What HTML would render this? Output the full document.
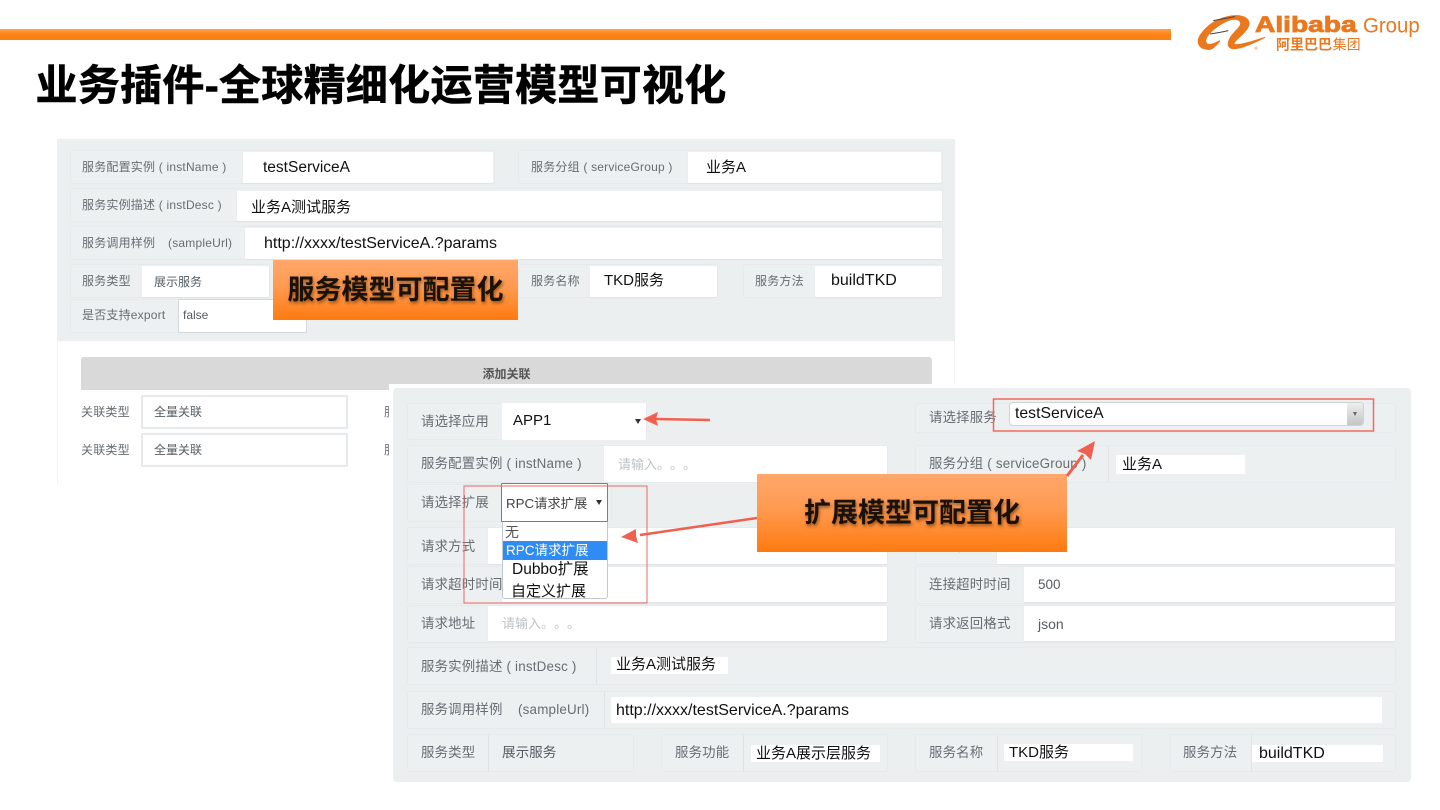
<!DOCTYPE html>
<html lang="zh"><head><meta charset="utf-8"><title>业务插件</title>
<style>
html,body{margin:0;padding:0;background:#fff}
#p{position:relative;width:1440px;height:810px;overflow:hidden;background:#fff;font-family:"Liberation Sans","Noto Sans CJK SC",sans-serif}
#p div{position:absolute;box-sizing:border-box}
.g{background:#edf0f1;border:1px solid #e7eaec;border-radius:3px}
.w{background:#fff;border-radius:1px}
.b{box-shadow:0 1px 1px #dfe3e6}
.t{white-space:nowrap;line-height:20px;height:20px;font-size:13.4px;letter-spacing:.2px;color:#666d72}
.t.m{font-size:12px;letter-spacing:.2px}
.k{white-space:nowrap;line-height:20px;height:20px;font-size:15px;color:#111}
.s{white-space:nowrap;line-height:20px;height:20px;font-size:13px;color:#555c61}
.h{white-space:nowrap;line-height:20px;height:20px;font-size:13px;color:#bcc2c6;text-spacing-trim:space-all}
.c{background:linear-gradient(#ffa76c,#ff9a50 45%,#ff7a10);text-align:center;font-weight:700;color:#1a1208;text-shadow:1px 2px 3px rgba(60,30,0,.55)}
</style></head><body><div id="p">

<div style="left:0;top:29px;width:1171px;height:11px;background:linear-gradient(#ffa348,#ff8418 45%,#fb7f14)"></div>

<svg style="position:absolute;left:1160px;top:0" width="280" height="70" viewBox="0 0 840 210">
<path d="M150 148C115 150 105 125 125 100C150 65 195 45 235 47C262 50 275 65 262 85C248 108 225 118 222 130C222 140 260 130 315 112C280 130 240 148 218 146C195 142 205 115 225 95C240 80 250 70 235 60C215 52 185 70 165 85C145 100 130 120 140 130C145 138 165 130 180 122C170 135 160 146 150 148Z" fill="#e9781e" stroke="#e9781e" stroke-width="3"/>
<path d="M150 102L180 97L205 92M160 62L225 50" fill="none" stroke="#444" stroke-width="3"/>
<text x="285" y="96" font-family="Liberation Sans" font-weight="700" font-size="66" fill="#e9781e" stroke="#e9781e" stroke-width="2.500" textLength="305" lengthAdjust="spacingAndGlyphs">Alibaba</text>
<text x="609" y="98" font-family="Liberation Sans" font-size="63" fill="#e9781e" textLength="170" lengthAdjust="spacingAndGlyphs">Group</text>
<text x="348" y="149" font-family="Liberation Sans,Noto Sans CJK SC,sans-serif" font-weight="700" font-size="42" fill="#e9781e">阿里巴巴</text>
<text x="518" y="149" font-family="Liberation Sans,Noto Sans CJK SC,sans-serif" font-size="42" fill="#e9781e">集团</text>
<text x="283" y="150" font-family="Liberation Sans" font-size="14" fill="#e9781e">®</text>
</svg>

<div style="left:35.500px;top:60px;height:52px;line-height:52px;font-size:42px;font-weight:700;letter-spacing:.3px;-webkit-text-stroke:.6px #000;color:#000;white-space:nowrap">业务插件-全球精细化运营模型可视化</div>

<!-- panel 1 -->
<div style="left:57px;top:341px;width:898px;height:143px;border-left:1px solid #f2f3f4;border-right:1px solid #f2f3f4"></div>
<div style="left:57px;top:139px;width:898px;height:202px;background:#ecefF0"></div>

<div class="g" style="left:70px;top:150px;width:425px;height:34px"></div>
<div class="w b" style="left:243px;top:152px;width:250px;height:31px"></div>
<div class="g" style="left:518px;top:150px;width:425px;height:34px"></div>
<div class="w b" style="left:688px;top:152px;width:253px;height:31px"></div>
<div class="g" style="left:70px;top:188px;width:873px;height:34px"></div>
<div class="w b" style="left:237px;top:191px;width:705px;height:30px"></div>
<div class="g" style="left:70px;top:226px;width:873px;height:34px"></div>
<div class="w b" style="left:245px;top:228px;width:697px;height:31px"></div>
<div class="g" style="left:70px;top:264px;width:200px;height:34px"></div>
<div class="w b" style="left:142px;top:266px;width:127px;height:31px"></div>
<div class="g" style="left:518px;top:264px;width:200px;height:34px"></div>
<div class="w b" style="left:590px;top:266px;width:127px;height:31px"></div>
<div class="g" style="left:743px;top:264px;width:200px;height:34px"></div>
<div class="w b" style="left:815px;top:266px;width:127px;height:31px"></div>
<div class="g" style="left:70px;top:299px;width:237px;height:34px"></div>
<div class="w" style="left:178px;top:299px;width:129px;height:34px;border:1px solid #d4d8dc"></div>

<div class="t m" style="left:82px;top:157px">服务配置实例 ( instName )</div>
<div class="k" style="left:263px;top:158px;font-size:15.500px">testServiceA</div>
<div class="t m" style="left:531px;top:157px">服务分组 ( serviceGroup )</div>
<div class="k" style="left:706px;top:158px">业务A</div>
<div class="t m" style="left:82px;top:195px">服务实例描述 ( instDesc )</div>
<div class="k" style="left:251px;top:198px">业务A测试服务</div>
<div class="t m" style="left:82px;top:233px">服务调用样例</div>
<div class="t m" style="left:168px;top:233px">(sampleUrl)</div>
<div class="k" style="left:264px;top:234px;font-size:16px">http://xxxx/testServiceA.?params</div>
<div class="t m" style="left:82px;top:271px">服务类型</div>
<div class="s" style="left:154px;top:272px;font-size:12px">展示服务</div>
<div class="t m" style="left:531px;top:271px">服务名称</div>
<div class="k" style="left:604px;top:271px">TKD服务</div>
<div class="t m" style="left:755px;top:271px">服务方法</div>
<div class="k" style="left:831px;top:271px;font-size:16px">buildTKD</div>
<div class="t m" style="left:82px;top:305px">是否支持export</div>
<div class="s" style="left:183px;top:305px;font-size:12px">false</div>

<div style="left:81px;top:357px;width:851px;height:33px;background:#d9d9d9;border-radius:3px 3px 0 0;text-align:center;line-height:35px;font-size:12px;font-weight:700;color:#555">添加关联</div>
<div class="t m" style="left:81px;top:402px">关联类型</div>
<div class="w" style="left:141px;top:395px;width:207px;height:34px;border:2px solid #e6eaed"></div>
<div class="s" style="left:154px;top:402px;font-size:12px">全量关联</div>
<div class="t m" style="left:81px;top:440px">关联类型</div>
<div class="w" style="left:141px;top:433px;width:207px;height:34px;border:2px solid #e6eaed"></div>
<div class="s" style="left:154px;top:440px;font-size:12px">全量关联</div>
<div class="t m" style="left:384px;top:402px">服</div>
<div class="t m" style="left:384px;top:440px">服</div>

<div class="c" style="left:273px;top:260px;width:245px;height:60px;line-height:61px;font-size:27px">服务模型可配置化</div>

<!-- panel 2 -->
<div style="left:389px;top:384px;width:1031px;height:404px;background:#fff"></div>
<div style="left:393px;top:388px;width:1018px;height:394px;background:#ecefF0;border-radius:4px"></div>

<div class="g" style="left:407px;top:403px;width:240px;height:37px"></div>
<div class="w" style="left:502px;top:403px;width:144px;height:37px"></div>
<div class="g" style="left:915px;top:403px;width:481px;height:30px"></div>
<div class="g" style="left:407px;top:445px;width:481px;height:38px"></div>
<div class="w" style="left:604px;top:446px;width:283px;height:36px"></div>
<div class="g" style="left:915px;top:445px;width:481px;height:38px"></div>
<div class="w" style="left:1116px;top:455px;width:129px;height:19px"></div>
<div class="g" style="left:407px;top:484px;width:205px;height:38px"></div>
<div class="g" style="left:407px;top:527px;width:481px;height:38px"></div>
<div class="w b" style="left:488px;top:528px;width:399px;height:36px"></div>
<div class="g" style="left:915px;top:527px;width:481px;height:38px"></div>
<div class="w b" style="left:997px;top:528px;width:398px;height:36px"></div>
<div class="g" style="left:407px;top:566px;width:481px;height:38px"></div>
<div class="w b" style="left:502px;top:567px;width:385px;height:35px"></div>
<div class="g" style="left:915px;top:566px;width:481px;height:38px"></div>
<div class="w b" style="left:1024px;top:567px;width:371px;height:35px"></div>
<div class="g" style="left:407px;top:605px;width:481px;height:38px"></div>
<div class="w b" style="left:488px;top:606px;width:399px;height:35px"></div>
<div class="g" style="left:915px;top:605px;width:481px;height:38px"></div>
<div class="w b" style="left:1024px;top:606px;width:371px;height:35px"></div>
<div class="g" style="left:407px;top:647px;width:989px;height:38px"></div>
<div class="w" style="left:611px;top:657px;width:117px;height:17px"></div>
<div class="g" style="left:407px;top:691px;width:989px;height:38px"></div>
<div class="w" style="left:611px;top:697px;width:771px;height:26px"></div>
<div class="g" style="left:407px;top:734px;width:227px;height:38px"></div>
<div class="g" style="left:661px;top:734px;width:227px;height:38px"></div>
<div class="w" style="left:751px;top:745px;width:129px;height:17px"></div>
<div class="g" style="left:915px;top:734px;width:227px;height:38px"></div>
<div class="w" style="left:1004px;top:744px;width:129px;height:17px"></div>
<div class="g" style="left:1170px;top:734px;width:226px;height:38px"></div>
<div class="w" style="left:1252px;top:745px;width:131px;height:17px"></div>
<div style="left:488px;top:735px;width:1px;height:36px;background:#e0e3e6"></div>
<div style="left:743px;top:735px;width:1px;height:36px;background:#e0e3e6"></div>
<div style="left:997px;top:735px;width:1px;height:36px;background:#e0e3e6"></div>
<div style="left:1251px;top:735px;width:1px;height:36px;background:#e0e3e6"></div>
<div style="left:596px;top:648px;width:1px;height:36px;background:#e0e3e6"></div>
<div style="left:604px;top:692px;width:1px;height:36px;background:#e0e3e6"></div>
<div style="left:1108px;top:446px;width:1px;height:36px;background:#e0e3e6"></div>

<div class="t" style="left:421px;top:412px">请选择应用</div>
<div class="k" style="left:513px;top:411px">APP1</div>
<div style="left:635px;top:419px;border:3.5px solid transparent;border-top:5px solid #333;border-bottom:0"></div>
<div class="t" style="left:929px;top:408px">请选择服务</div>
<div style="left:1009px;top:402px;width:355px;height:24px;background:#fff;border:1px solid #cfd3d3;border-radius:4px"></div>
<div style="left:1347px;top:403px;width:16px;height:22px;background:linear-gradient(#eee,#c4c6c6);border-radius:0 3px 3px 0"></div>
<div style="left:1353px;top:412px;border:2.5px solid transparent;border-top:4px solid #666;border-bottom:0"></div>
<div class="k" style="left:1015px;top:404px;font-size:15.800px">testServiceA</div>
<div class="t" style="left:421px;top:454px">服务配置实例 ( instName )</div>
<div class="h" style="left:618px;top:455px">请输入。。。</div>
<div class="t" style="left:929px;top:454px">服务分组 ( serviceGroup )</div>
<div class="k" style="left:1122px;top:455px">业务A</div>
<div class="t" style="left:421px;top:493px">请选择扩展</div>
<div class="w" style="left:501px;top:483px;width:107px;height:39px;border:1px solid #5a82bf"></div>
<div class="s" style="left:506px;top:494px;color:#444;font-size:13.300px">RPC请求扩展</div>
<div style="left:596px;top:500px;border:3px solid transparent;border-top:5px solid #333;border-bottom:0"></div>
<div class="t" style="left:421px;top:537px">请求方式</div>
<div class="t" style="left:929px;top:537px">请求参数</div>
<div class="t" style="left:421px;top:575px">请求超时时间</div>
<div class="t" style="left:929px;top:575px">连接超时时间</div>
<div class="s" style="left:1038px;top:575px;font-size:13.500px">500</div>
<div class="t" style="left:421px;top:614px">请求地址</div>
<div class="h" style="left:502px;top:614px">请输入。。。</div>
<div class="t" style="left:929px;top:614px">请求返回格式</div>
<div class="s" style="left:1038px;top:614px;font-size:14px">json</div>
<div class="t" style="left:421px;top:657px">服务实例描述 ( instDesc )</div>
<div class="k" style="left:616px;top:655px">业务A测试服务</div>
<div class="t" style="left:421px;top:700px">服务调用样例</div>
<div class="t" style="left:518px;top:700px">(sampleUrl)</div>
<div class="k" style="left:616px;top:701px;font-size:16px">http://xxxx/testServiceA.?params</div>
<div class="t" style="left:421px;top:743px">服务类型</div>
<div class="s" style="left:502px;top:743px;font-size:13.600px">展示服务</div>
<div class="t" style="left:675px;top:743px">服务功能</div>
<div class="k" style="left:756px;top:744px">业务A展示层服务</div>
<div class="t" style="left:929px;top:743px">服务名称</div>
<div class="k" style="left:1009px;top:743px">TKD服务</div>
<div class="t" style="left:1183px;top:743px">服务方法</div>
<div class="k" style="left:1259px;top:744px;font-size:16px">buildTKD</div>

<!-- dropdown -->
<div class="w" style="left:502px;top:522px;width:106px;height:77px;border:1px solid #c0c8d4;border-top:0;border-radius:0 0 3px 3px"></div>
<div class="s" style="left:505px;top:522px;font-size:14px;color:#555">无</div>
<div style="left:503px;top:541px;width:104px;height:19px;background:#2f8cf5"></div>
<div class="s" style="left:506px;top:541px;color:#fff;font-size:13.500px">RPC请求扩展</div>
<div class="k" style="left:512px;top:560px;font-size:15.500px">Dubbo扩展</div>
<div class="k" style="left:511px;top:582px">自定义扩展</div>

<div class="c" style="left:757px;top:474px;width:310px;height:78px;line-height:78px;font-size:27px">扩展模型可配置化</div>

<svg style="position:absolute;left:0;top:0" width="1440" height="810">
<rect x="464" y="486" width="183" height="117" fill="none" stroke="#e86a64" stroke-width="1"/>
<rect x="993.500" y="399" width="380" height="32" fill="none" stroke="#f26a5e" stroke-width="1.500"/>
<path d="M710 420L655 419" stroke="#f0604f" stroke-width="2.500"/>
<path d="M643 419L658 412L656 419L658 426Z" fill="#f0604f"/>
<path d="M757 518L640 535" stroke="#f0604f" stroke-width="2.500"/>
<path d="M621 537L636 529L636 536L638 543Z" fill="#f0604f"/>
<path d="M1067 476L1083 455" stroke="#f0604f" stroke-width="3"/>
<path d="M1095 441L1091 460L1085 454L1077 451Z" fill="#f0604f"/>
</svg>
</div></body></html>
